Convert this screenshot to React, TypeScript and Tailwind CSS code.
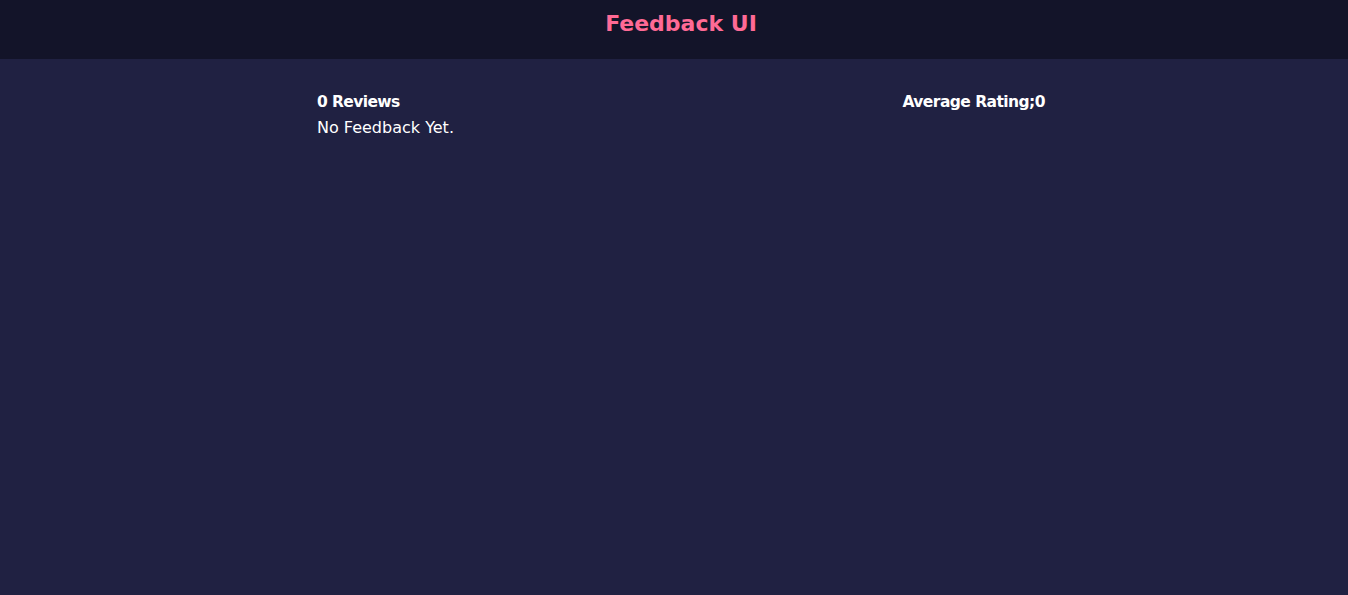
export default function App() {
  return (
    <div className="min-h-[595px] bg-[#202142] text-white" style={{ fontFamily: "'DejaVu Sans', sans-serif" }}>
      <header className="h-[59px] bg-[#131429] flex items-center justify-center pl-[14px]">
        <h1 className="text-[22px] font-bold text-[#ff6a95] leading-none -mt-[12px]">Feedback UI</h1>
      </header>
      <main className="ml-[317px] w-[728px] pt-[32px]">
        <div className="flex justify-between items-start">
          <div>
            <h4 className="text-[15.5px] font-bold leading-[22px] tracking-[-0.6px]">0 Reviews</h4>
            <p className="text-[16px] leading-[30px]">No Feedback Yet.</p>
          </div>
          <h4 className="text-[15.5px] font-bold leading-[22px] tracking-[-0.55px]">Average Rating;0</h4>
        </div>
      </main>
    </div>
  );
}
